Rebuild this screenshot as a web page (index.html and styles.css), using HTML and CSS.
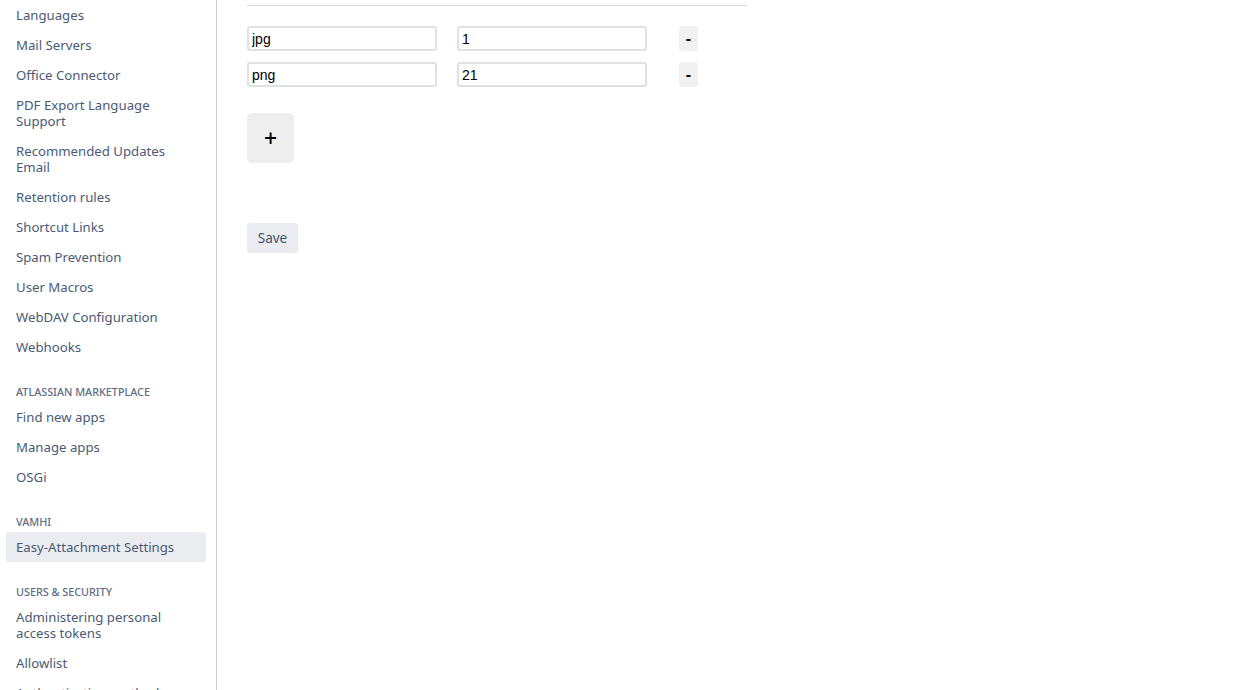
FILE: index.html
```html
<!DOCTYPE html>
<html>
<head>
<meta charset="utf-8">
<title>Easy-Attachment Settings</title>
<link rel="stylesheet" href="styles.css">
</head>
<body>
<nav class="sidebar">
  <ul class="nav">
    <li class="item">Languages</li>
    <li class="item">Mail Servers</li>
    <li class="item">Office Connector</li>
    <li class="item">PDF Export Language Support</li>
    <li class="item">Recommended Updates Email</li>
    <li class="item">Retention rules</li>
    <li class="item">Shortcut Links</li>
    <li class="item">Spam Prevention</li>
    <li class="item">User Macros</li>
    <li class="item">WebDAV Configuration</li>
    <li class="item">Webhooks</li>
  </ul>
  <div class="heading">Atlassian Marketplace</div>
  <ul class="nav">
    <li class="item">Find new apps</li>
    <li class="item">Manage apps</li>
    <li class="item">OSGi</li>
  </ul>
  <div class="heading">VAMHI</div>
  <ul class="nav">
    <li class="item selected">Easy-Attachment Settings</li>
  </ul>
  <div class="heading">Users &amp; Security</div>
  <ul class="nav">
    <li class="item">Administering personal access tokens</li>
    <li class="item">Allowlist</li>
    <li class="item">Authentication methods</li>
  </ul>
</nav>
<main class="content">
  <div class="rule"></div>
  <div class="rows">
    <div class="row">
      <input class="field" type="text" value="jpg">
      <input class="field" type="text" value="1">
      <button class="minus">-</button>
    </div>
    <div class="row">
      <input class="field" type="text" value="png">
      <input class="field" type="text" value="21">
      <button class="minus">-</button>
    </div>
  </div>
  <button class="plus">+</button>
  <button class="save">Save</button>
</main>
</body>
</html>
```

FILE: styles.css
```css
html, body {
  margin: 0;
  padding: 0;
  background: #fff;
}
body {
  display: flex;
  align-items: stretch;
  height: 690px;
  overflow: hidden;
  font-family: "Noto Sans", "Open Sans", sans-serif;
}
.sidebar {
  width: 200px;
  padding: 0 10px 0 6px;
  border-right: 1px solid #cccccc;
  flex: none;
}
.nav {
  list-style: none;
  margin: 0;
  padding: 0;
}
.item {
  padding: 7px 10px;
  font-size: 13.2px;
  line-height: 16px;
  color: #4a5a75;
  border-radius: 3px;
}
.item.selected {
  background: #ebecf0;
}
.heading {
  margin: 22px 0 2px;
  padding: 0 10px;
  font-size: 10.8px;
  line-height: 16px;
  font-weight: 500;
  text-transform: uppercase;
  color: #5e6c84;
}
.content {
  padding: 5px 0 0 30px;
  display: flex;
  flex-direction: column;
  align-items: flex-start;
}
.rule {
  width: 500px;
  border-top: 1px solid #d9d9d9;
  margin-bottom: 20px;
}
.rows {
  display: flex;
  flex-direction: column;
  gap: 11px;
}
.row {
  display: flex;
  align-items: center;
}
.field {
  box-sizing: border-box;
  width: 190px;
  height: 25px;
  margin: 0 20px 0 0;
  padding: 0 3px;
  border: 2px solid #dfe1e6;
  border-radius: 3px;
  font-family: "Liberation Sans", Arial, sans-serif;
  font-size: 14px;
  color: #000;
  background: #fff;
}
.minus {
  box-sizing: border-box;
  width: 19px;
  height: 25px;
  margin-left: 12px;
  padding: 0;
  border: none;
  border-radius: 3px;
  background: #f1f1f1;
  font-family: "Liberation Sans", Arial, sans-serif;
  font-size: 16px;
  font-weight: bold;
  color: #000;
}
.plus {
  box-sizing: border-box;
  width: 47px;
  height: 50px;
  margin-top: 26px;
  padding: 0;
  border: none;
  border-radius: 5px;
  background: #eeeeee;
  font-family: "Noto Sans", sans-serif;
  font-size: 23px;
  font-weight: 500;
  line-height: 1;
  color: #000;
}
.save {
  box-sizing: border-box;
  width: 51px;
  height: 30px;
  margin-top: 60px;
  padding: 0;
  border: none;
  border-radius: 3px;
  background: #ebecf0;
  font-family: "Noto Sans", sans-serif;
  font-size: 13.5px;
  color: #42526e;
}
```
